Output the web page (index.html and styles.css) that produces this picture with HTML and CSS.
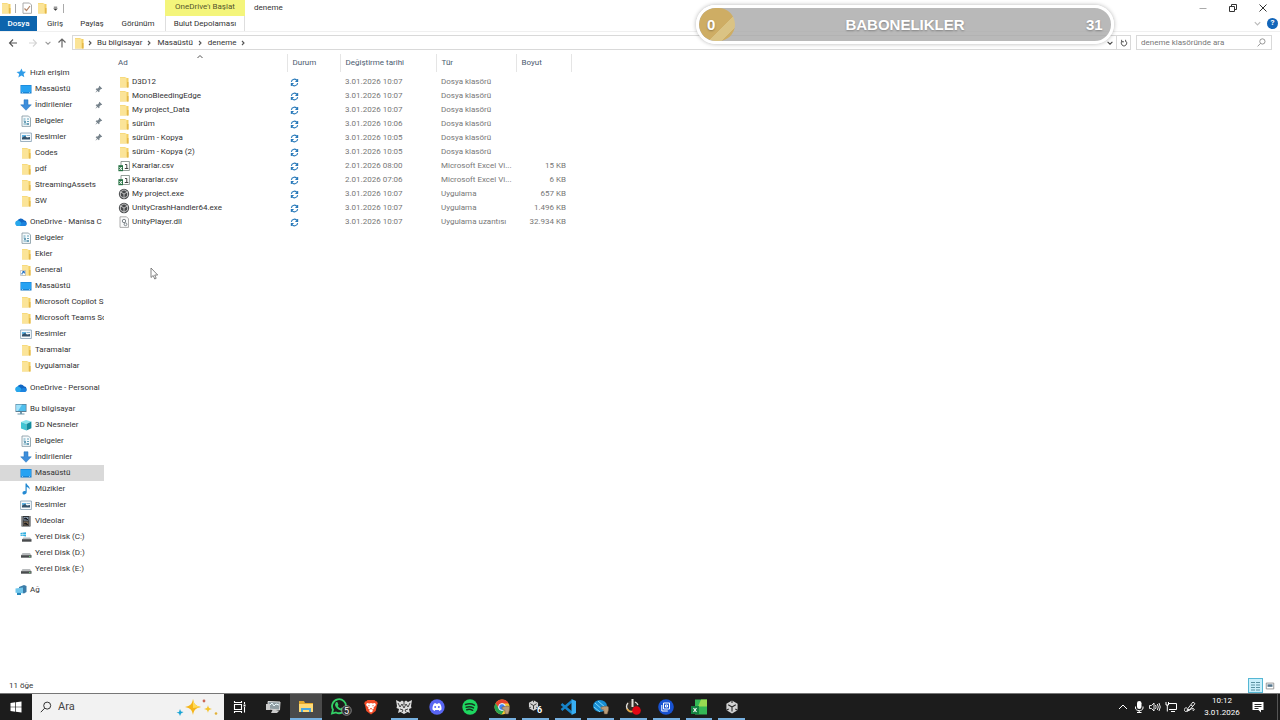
FILE: index.html
```html
<!DOCTYPE html>
<html lang="tr">
<head>
<meta charset="utf-8">
<title>deneme</title>
<link rel="stylesheet" href="styles.css">
</head>
<body>
<svg class="sprite" aria-hidden="true">
  <symbol id="folder" viewBox="0 0 12 12"><path fill="#f3cf62" d="M2 1h5l1 1h2.500v9.500H2z"/><path fill="#fbe498" d="M2 1.500h6.500V11H2z"/><path fill="#e3b84a" d="M9 6h1.500v5.500H9z"/></symbol>
  <symbol id="star" viewBox="0 0 12 12"><path fill="#2f9ce8" d="M6.500 1.500l1.200 2.900 3.300.3-2.400 2.200.7 3.400-2.800-1.700-3.200 1.900.9-3.500L1.500 5l3.400-.4z"/></symbol>
  <symbol id="desktop" viewBox="0 0 12 12"><path fill="#1479c9" d="M.500 2h11v8.500H.500z"/><path fill="#27a2f2" d="M1 2.500h10v6.800H1z"/><path fill="#fff" d="M2 9.600h1v.5H2zM9 9.600h1v.5H9z"/></symbol>
  <symbol id="down" viewBox="0 0 12 12"><path fill="#3e8edb" stroke="#2370bb" stroke-width=".5" d="M4 .8h4v5h3.300L6 11.300.7 5.800H4z"/></symbol>
  <symbol id="doc" viewBox="0 0 12 12"><path fill="#f6fafc" stroke="#8095a0" stroke-width=".8" d="M2 1h6.500l2 2v8.400H2z"/><path fill="none" stroke="#3c8aa8" stroke-width=".8" d="M3.500 4h2M7 4h2M3.500 6h2M7 6.500h2M3.500 9h5.500"/><path fill="#70a1b8" d="M4 6h2v2H4zM7 8h2v2H7z"/></symbol>
  <symbol id="picture" viewBox="0 0 12 12"><path fill="#f8fbfd" stroke="#849eb2" stroke-width=".8" d="M.6 2h10.800v8.500H.6z"/><path fill="#5fb2e2" d="M2 4h4v2H2z"/><path fill="#34526b" d="M2 8.500V6.500L5 5l2 1.500L10 6v2.500z"/><path fill="#8cb6d1" d="M6.500 4H10v1H6.500z"/></symbol>
  <symbol id="cloud" viewBox="0 0 12 12"><path fill="#1167c4" d="M3 10a2.700 2.700 0 0 1-.6-5.200A3.700 3.700 0 0 1 9 4.300 2.900 2.900 0 0 1 9.500 10z"/><path fill="#28a8ec" d="M3 10a2.700 2.700 0 0 1 0-5.400c2 0 3.500 2.600 6.500 5.400z"/><path fill="#1b83df" d="M6 7.500c2-2.500 5.600-1.700 5.600.500A2 2 0 0 1 9.500 10H5z"/></symbol>
  <symbol id="link" viewBox="0 0 12 12"><use href="#folder"/><path fill="#fff" stroke="#999" stroke-width=".5" d="M.5 6.500h5v5h-5z"/><path fill="none" stroke="#176abf" d="M2 10.500V9l2-1M2.500 7.500H4.300V9.500"/></symbol>
  <symbol id="pc" viewBox="0 0 12 12"><path fill="#5c7d92" d="M.5 1h11v8H.5z"/><path fill="#4fbfee" d="M1.200 1.700h9.600v6.300H1.200z"/><path fill="#a2e2fa" d="M1.200 1.700H7L3 8H1.200z"/><path fill="#739aae" d="M5 9h2v1.500h2.500v1h-7v-1H5z"/></symbol>
  <symbol id="cube" viewBox="0 0 12 12"><path fill="#8be5ed" d="M1 3l5-2 5.400 1.500L6.500 5z"/><path fill="#42c5d3" d="M1 3l5.500 2v6.500L1 9.500z"/><path fill="#168d9e" d="M6.500 5l4.900-2.500v6.800l-4.900 2.200z"/></symbol>
  <symbol id="note" viewBox="0 0 12 12"><path fill="#2389d2" d="M5.500.5h1.200c.3 2 3.600 2.500 2.700 6-.5-1.700-1.400-2.200-2.700-2.600v5.400c-.2 2.500-4.200 2.900-4.200.6 0-1.600 1.800-2.300 3-1.600z"/></symbol>
  <symbol id="film" viewBox="0 0 12 12"><path fill="#303438" d="M1.500 1h9v10.500h-9z"/><path fill="#8496a9" d="M3.500 2h5v3.500h-5z"/><path fill="#75634e" d="M3.500 6.500h5v4h-5z"/><path stroke="#eee" stroke-dasharray="1 1" d="M2.500 1.500V11M9.500 1.500V11" stroke-width=".8"/><path stroke="#181b25" d="M4 4l2-1 2 2M4 9l2-1 2 2"/></symbol>
  <symbol id="disk" viewBox="0 0 12 12"><path fill="#b8bbbd" d="M2.500 6h7.500l1.500 2.500H1z"/><path fill="#484b4d" d="M1 8.200h10.500v2.500H1z"/><path fill="#7cec8b" d="M9 9h1.500v.8H9z"/></symbol>
  <symbol id="diskwin" viewBox="0 0 12 12"><path fill="#b8bbbd" d="M3.500 6.500H10l1.500 2H2z"/><path fill="#484b4d" d="M2 8.200h9.500v2.500H2z"/><path fill="#30afe0" d="M.5 2l2.200-.4v1.500H.5zM3.100 1.500L6 1.200v1.900H3.100zM.5 3.500h2.200V5L.5 4.800zM3.100 3.500H6v2l-2.900-.4z"/></symbol>
  <symbol id="network" viewBox="0 0 12 12"><path fill="#3b7ca8" d="M4 3l5-2 2.500 1v6L9 9.500 4 8z"/><path fill="#70c6eb" d="M.5 4.500l7.500-1v5.700l-7.500-.5z"/><path fill="#2688bd" d="M2 8.700l4 .3v2H2z"/></symbol>
  <symbol id="pin" viewBox="0 0 10 10"><path fill="#77838c" d="M5.500 1L9 4.500l-.8.6-.7-.2-2 2 .1 1.500-.8.8L3.200 7.500 1 9.300l-.3-.2 1.800-2.300L.8 5.200l.8-.8 1.600.1 2-2-.3-.8z"/></symbol>
  <symbol id="csv" viewBox="0 0 12 12"><path fill="#fff" stroke="#798780" stroke-width=".8" d="M3 1.500h8.400v9H3z"/><path fill="#247142" d="M.4 5.200h4.600v6H.4z"/><path fill="none" stroke="#fff" d="M1.500 7l2.500 3M4 7l-2.500 3"/><path fill="none" stroke="#333" stroke-width=".9" d="M7 4.500h1.800v4M6.800 8.500h3.500"/></symbol>
  <symbol id="unity" viewBox="0 0 12 12"><circle cx="6" cy="6" r="5.200" fill="#484a4c"/><path fill="none" stroke="#ddd" stroke-width=".8" d="M6 1.800l3.600 2.100v4.200L6 10.200 2.400 8.100V3.900zM6 6v4.200M6 6L2.400 3.900M6 6l3.600-2.100"/></symbol>
  <symbol id="dll" viewBox="0 0 12 12"><path fill="#fafafa" stroke="#999" stroke-width=".8" d="M2 .8h6.500l2 2v8.600H2z"/><circle cx="6" cy="5" r="1.700" fill="none" stroke="#7d858b"/><circle cx="7.500" cy="8.300" r="1.400" fill="none" stroke="#7d858b"/></symbol>
  <symbol id="sync" viewBox="0 0 10 10"><path fill="none" stroke="#2678b9" stroke-width="1.200" d="M1.500 4.300A3.400 3.400 0 0 1 8 3.300M8.500 5.700A3.400 3.400 0 0 1 2 6.700M8.500 1v2.800H6M1.500 9V6.200H4"/></symbol>
  <symbol id="right" viewBox="0 0 8 8"><path fill="none" stroke="#555" stroke-width="1.100" d="M3 2l2 2-2 2"/></symbol>
  <symbol id="chev" viewBox="0 0 10 10"><path fill="none" stroke="currentColor" stroke-width="1.300" d="M2 3.500L5 6.500l3-3"/></symbol>
  <symbol id="lens" viewBox="0 0 12 12"><circle cx="7.200" cy="4.600" r="3.500" fill="none" stroke="currentColor" stroke-width="1"/><path stroke="currentColor" stroke-width="1" d="M4.700 7.200L.8 11.200"/></symbol>
  <symbol id="hex" viewBox="0 0 16 16"><path fill="#d2d2d2" d="M8 1.500l5.600 3.200v6.600L8 14.500l-5.600-3.200V4.700z"/><path fill="none" stroke="#292929" stroke-width="1.100" d="M8 8v4.500M8 8L4.200 5.800M8 8l3.800-2.200M8 1v3M2 11.500l2.700-1.500M14 11.500L11.300 10"/></symbol>
  <symbol id="hand" viewBox="0 0 16 16"><path fill="#b99c7a" stroke="#66513d" stroke-width=".5" d="M8 8l6-1 1.500 1v3l-1.200 4h-3l-.6-4L8 10z"/></symbol>
</svg>

<header>
  <div class="titlebar">
    <div class="quick">
      <svg class="icon"><use href="#folder"/></svg><span class="rule"></span>
      <button class="props" aria-label="Özellikler"><svg class="icon" viewBox="0 0 12 12"><path fill="#fff" stroke="#aaa" d="M2 1h6.500l2 2v8.300H2z"/><path fill="none" stroke="#b28568" stroke-width="1.200" d="M3.500 6.500l2 2L9 4"/></svg></button>
      <button aria-label="Yeni klasör"><svg class="icon"><use href="#folder"/></svg></button>
      <button aria-label="Özelleştir"><svg class="mini" viewBox="0 0 8 8"><path fill="#333" d="M2 4h4L4 6zM2.500 2.500h3v.5h-3z"/></svg></button><span class="rule"></span>
    </div>
    <div class="context">OneDrive'ı Başlat</div>
    <h1>deneme</h1>
    <div class="window-buttons">
      <button aria-label="Simge durumuna küçült"><svg viewBox="0 0 10 10"><path stroke="#aaa" d="M1.500 5.500h7"/></svg></button>
      <button aria-label="Önceki boyut"><svg viewBox="0 0 10 10"><path fill="none" stroke="#333" d="M1.500 3.500h5v5h-5zM3.500 3V1.500h5v5H7"/></svg></button>
      <button aria-label="Kapat"><svg viewBox="0 0 10 10"><path stroke="#333" d="M1.500 1.500l7 7M8.500 1.500l-7 7"/></svg></button>
    </div>
  </div>
  <nav class="tabs" aria-label="Şerit">
    <button class="tab file">Dosya</button>
    <button class="tab home">Giriş</button>
    <button class="tab share">Paylaş</button>
    <button class="tab view">Görünüm</button>
    <button class="tab cloud-tab">Bulut Depolaması</button>
    <div class="help"><button aria-label="Şeridi genişlet"><svg class="mini faded"><use href="#chev"/></svg></button>
    <button class="question" aria-label="Yardım">?</button></div>
  </nav>
</header>

<div class="address-row">
  <div class="history">
    <button aria-label="Geri"><svg viewBox="0 0 12 12"><path fill="none" stroke="#555" stroke-width="1.100" d="M10 6H2.500M6 2.500L2.500 6 6 9.500"/></svg></button>
    <button aria-label="İleri"><svg viewBox="0 0 12 12"><path fill="none" stroke="#d5d5d5" stroke-width="1.100" d="M2 6h7.500M6 2.500L9.500 6 6 9.500"/></svg></button>
    <button class="slim" aria-label="Son konumlar"><svg class="recent"><use href="#chev"/></svg></button>
    <button aria-label="Yukarı"><svg viewBox="0 0 12 12"><path fill="none" stroke="#666" stroke-width="1.200" d="M6 10.500V2M2.500 5.500L6 2l3.500 3.500"/></svg></button>
  </div>
  <div class="address">
    <svg class="icon"><use href="#folder"/></svg><svg class="mini"><use href="#right"/></svg>
    <a href="#">Bu bilgisayar</a><svg class="mini"><use href="#right"/></svg>
    <a href="#">Masaüstü</a><svg class="mini"><use href="#right"/></svg>
    <a href="#">deneme</a><svg class="mini"><use href="#right"/></svg>
    <div class="address-end"><button aria-label="Adresler"><svg class="mini dark"><use href="#chev"/></svg></button>
    <button class="refresh" aria-label="Yenile"><svg class="mini" viewBox="0 0 10 10"><path fill="none" stroke="#555" stroke-width="1.200" d="M7 2.500A3.400 3.400 0 1 1 3 2.500M2 1v2.500h3M7 1v2"/></svg></button></div>
  </div>
  <label class="find"><input type="search" aria-label="Ara" placeholder="deneme klasöründe ara"><svg class="mini"><use href="#lens"/></svg></label>
</div>

<main>
  <nav class="tree" aria-label="Gezinti">
    <ul>
      <li><a class="root" href="#"><svg class="icon"><use href="#star"/></svg>Hızlı erişim</a></li>
      <li><a href="#"><svg class="icon"><use href="#desktop"/></svg>Masaüstü<svg class="pin"><use href="#pin"/></svg></a></li>
      <li><a href="#"><svg class="icon"><use href="#down"/></svg>İndirilenler<svg class="pin"><use href="#pin"/></svg></a></li>
      <li><a href="#"><svg class="icon"><use href="#doc"/></svg>Belgeler<svg class="pin"><use href="#pin"/></svg></a></li>
      <li><a href="#"><svg class="icon"><use href="#picture"/></svg>Resimler<svg class="pin"><use href="#pin"/></svg></a></li>
      <li><a href="#"><svg class="icon"><use href="#folder"/></svg>Codes</a></li>
      <li><a href="#"><svg class="icon"><use href="#folder"/></svg>pdf</a></li>
      <li><a href="#"><svg class="icon"><use href="#folder"/></svg>StreamingAssets</a></li>
      <li><a href="#"><svg class="icon"><use href="#folder"/></svg>SW</a></li>
    </ul>
    <ul>
      <li><a class="root" href="#"><svg class="icon"><use href="#cloud"/></svg>OneDrive - Manisa C</a></li>
      <li><a href="#"><svg class="icon"><use href="#doc"/></svg>Belgeler</a></li>
      <li><a href="#"><svg class="icon"><use href="#folder"/></svg>Ekler</a></li>
      <li><a href="#"><svg class="icon"><use href="#link"/></svg>General</a></li>
      <li><a href="#"><svg class="icon"><use href="#desktop"/></svg>Masaüstü</a></li>
      <li><a href="#"><svg class="icon"><use href="#folder"/></svg>Microsoft Copilot S</a></li>
      <li><a href="#"><svg class="icon"><use href="#folder"/></svg>Microsoft Teams So</a></li>
      <li><a href="#"><svg class="icon"><use href="#picture"/></svg>Resimler</a></li>
      <li><a href="#"><svg class="icon"><use href="#folder"/></svg>Taramalar</a></li>
      <li><a href="#"><svg class="icon"><use href="#folder"/></svg>Uygulamalar</a></li>
    </ul>
    <ul class="personal">
      <li><a class="root" href="#"><svg class="icon"><use href="#cloud"/></svg>OneDrive - Personal</a></li>
    </ul>
    <ul>
      <li><a class="root" href="#"><svg class="icon"><use href="#pc"/></svg>Bu bilgisayar</a></li>
      <li><a href="#"><svg class="icon"><use href="#cube"/></svg>3D Nesneler</a></li>
      <li><a href="#"><svg class="icon"><use href="#doc"/></svg>Belgeler</a></li>
      <li><a href="#"><svg class="icon"><use href="#down"/></svg>İndirilenler</a></li>
      <li><a class="current" href="#"><svg class="icon"><use href="#desktop"/></svg>Masaüstü</a></li>
      <li><a href="#"><svg class="icon"><use href="#note"/></svg>Müzikler</a></li>
      <li><a href="#"><svg class="icon"><use href="#picture"/></svg>Resimler</a></li>
      <li><a href="#"><svg class="icon"><use href="#film"/></svg>Videolar</a></li>
      <li><a href="#"><svg class="icon"><use href="#diskwin"/></svg>Yerel Disk (C:)</a></li>
      <li><a href="#"><svg class="icon"><use href="#disk"/></svg>Yerel Disk (D:)</a></li>
      <li><a href="#"><svg class="icon"><use href="#disk"/></svg>Yerel Disk (E:)</a></li>
    </ul>
    <ul>
      <li><a class="root" href="#"><svg class="icon"><use href="#network"/></svg>Ağ</a></li>
    </ul>
  </nav>
  <section class="files">
    <table>
      <colgroup><col class="c-name"><col class="c-state"><col class="c-date"><col class="c-type"><col class="c-size"></colgroup>
      <thead><tr><th>Ad<svg class="sort" viewBox="0 0 8 6"><path fill="none" stroke="#555" d="M1.500 4L4 1.500 6.500 4"/></svg></th><th>Durum</th><th>Değiştirme tarihi</th><th>Tür</th><th>Boyut</th></tr></thead>
      <tbody>
        <tr><td><svg class="icon"><use href="#folder"/></svg>D3D12</td><td><svg class="sync"><use href="#sync"/></svg></td><td>3.01.2026 10:07</td><td>Dosya klasörü</td><td></td></tr>
        <tr><td><svg class="icon"><use href="#folder"/></svg>MonoBleedingEdge</td><td><svg class="sync"><use href="#sync"/></svg></td><td>3.01.2026 10:07</td><td>Dosya klasörü</td><td></td></tr>
        <tr><td><svg class="icon"><use href="#folder"/></svg>My project_Data</td><td><svg class="sync"><use href="#sync"/></svg></td><td>3.01.2026 10:07</td><td>Dosya klasörü</td><td></td></tr>
        <tr><td><svg class="icon"><use href="#folder"/></svg>sürüm</td><td><svg class="sync"><use href="#sync"/></svg></td><td>3.01.2026 10:06</td><td>Dosya klasörü</td><td></td></tr>
        <tr><td><svg class="icon"><use href="#folder"/></svg>sürüm - Kopya</td><td><svg class="sync"><use href="#sync"/></svg></td><td>3.01.2026 10:05</td><td>Dosya klasörü</td><td></td></tr>
        <tr><td><svg class="icon"><use href="#folder"/></svg>sürüm - Kopya (2)</td><td><svg class="sync"><use href="#sync"/></svg></td><td>3.01.2026 10:05</td><td>Dosya klasörü</td><td></td></tr>
        <tr><td><svg class="icon"><use href="#csv"/></svg>Kararlar.csv</td><td><svg class="sync"><use href="#sync"/></svg></td><td>2.01.2026 08:00</td><td>Microsoft Excel Vi...</td><td>15 KB</td></tr>
        <tr><td><svg class="icon"><use href="#csv"/></svg>Kkararlar.csv</td><td><svg class="sync"><use href="#sync"/></svg></td><td>2.01.2026 07:06</td><td>Microsoft Excel Vi...</td><td>6 KB</td></tr>
        <tr><td><svg class="icon"><use href="#unity"/></svg>My project.exe</td><td><svg class="sync"><use href="#sync"/></svg></td><td>3.01.2026 10:07</td><td>Uygulama</td><td>657 KB</td></tr>
        <tr><td><svg class="icon"><use href="#unity"/></svg>UnityCrashHandler64.exe</td><td><svg class="sync"><use href="#sync"/></svg></td><td>3.01.2026 10:07</td><td>Uygulama</td><td>1.496 KB</td></tr>
        <tr><td><svg class="icon"><use href="#dll"/></svg>UnityPlayer.dll</td><td><svg class="sync"><use href="#sync"/></svg></td><td>3.01.2026 10:07</td><td>Uygulama uzantısı</td><td>32.934 KB</td></tr>
      </tbody>
    </table>
  </section>
</main>

<div class="status">
  <span>11 öğe</span>
  <div class="modes">
    <button class="chosen" aria-label="Ayrıntılar"><svg viewBox="0 0 12 12"><path stroke="#5a92a2" stroke-dasharray="4 1" d="M1 2.500h10M1 5h10M1 7.500h10M1 10h10"/></svg></button>
    <button aria-label="Büyük simgeler"><svg viewBox="0 0 12 12"><path fill="#fff" stroke="#888" d="M1.500 2.500h9v7h-9z"/><path fill="#55768d" d="M3 4h6v3H3z"/></svg></button>
  </div>
</div>

<footer class="taskbar">
  <button class="start" aria-label="Başlat"><svg viewBox="0 0 12 12"><path fill="#fff" d="M.5 2L5.300 1.300v4.400H.5zM6 1.200l5.500-.8v5.300H6zM.5 6.300h4.800v4.400L.5 10zM6 6.300h5.500v5.300L6 10.800z"/></svg></button>
  <label class="search"><svg class="icon"><use href="#lens"/></svg><input type="text" aria-label="Windows'ta ara" placeholder="Ara">
    <svg class="sparkles" viewBox="0 0 42 20"><path fill="#f5b519" d="M17 2c1 5 2.500 7 8 8-5.500 1-7 3-8 8-1-5-2.500-7-8-8 5.500-1 7-3 8-8z"/><path fill="#ffda55" d="M17 2c1 5 2.500 7 8 8l-8 1z"/><path fill="#f4c42b" d="M32 8c.5 3 1.500 3.500 4 4-2.500.5-3.500 1-4 4-.5-3-1.500-3.500-4-4 2.500-.5 3.500-1 4-4z"/><path fill="#1aa4d4" d="M4 12l1 2.500 2.500.5L5 16.500 4 19l-1-2.500-2.500-1L3 15z"/><circle cx="28" cy="4" r="1.400" fill="#cc6754"/><circle cx="40" cy="16.500" r="1.300" fill="#e2b238"/></svg>
  </label>
  <div class="apps">
    <button aria-label="Görev görünümü"><svg viewBox="0 0 16 16"><path fill="none" stroke="#fff" stroke-width="1.100" d="M2.500 5.500h7v5h-7zM2.500 2v1.500h7V2M2.500 14v-1.500h7V14M12.500 3v2M12.500 8v5.500"/><path fill="#fff" d="M11.500 5.500h2v2h-2z"/></svg></button>
    <button aria-label="Sistem izleyici"><svg viewBox="0 0 16 16"><path fill="#8f9da3" stroke="#ddd" d="M3 2.500l12 .5-.5 8-11-1z"/><path fill="none" stroke="#ecfaff" d="M4 7l3-3 2 3 2-2 3 1"/><path fill="#ccc" d="M1 5h4v6H1zM8 10l6 2-2 2H6z"/></svg></button>
    <button class="open active" aria-label="Dosya Gezgini"><svg viewBox="0 0 16 16"><path fill="#e4a92d" d="M1 2h5l1 2h8v9H1z"/><path fill="#ffda75" d="M1 5h14v8H1z"/><path fill="#4ba8df" d="M3 9h10v4h-2v-2H5v2H3z"/></svg></button>
    <button aria-label="WhatsApp"><svg class="wide" viewBox="0 0 22 18"><path fill="none" stroke="#33d066" stroke-width="1.800" d="M2 15.500l1-3.800A7 7 0 1 1 6 14.500z"/><path fill="#33d066" d="M6 4l1.500.3L8.500 7l-.8 1c1 1.500 1.800 2 3 2.500l1-1 2 1c0 2-1.500 2.500-3 2C7.500 11.500 5 8.500 5 6.500z"/><circle cx="16.500" cy="12.500" r="4.800" fill="#303030" stroke="#aaa" stroke-width=".7"/><text x="14" y="16" class="badge">5</text></svg></button>
    <button aria-label="Brave"><svg viewBox="0 0 16 16"><path fill="#f04b27" d="M4.500 1h7l1.200 1.300 1.300.2.800 2-.8 1.500-1.300 6L8 15.500 3.300 12 2 6l-.8-1.500.8-2 1.300-.2z"/><path fill="#fff" d="M4 4l2.500.5L8 4l1.500.5L12 4l1 2-2.500 2.500.3 1.500-1.800.5 1 1.500L8 13.500 6 12l1-1.500-1.800-.5.3-1.500L3 6z"/><path fill="#f04b27" d="M5 6l2 .8-1 .7zM11 6l-2 .8 1 .7zM7 9h2l-1 2z"/></svg></button>
    <button class="open" aria-label="Wallpaper"><svg viewBox="0 0 16 16"><path fill="#ddd" d="M0 1l4 2 2-1.500L8 3l2-1.500L12 3l4-2-1 6 .5 2-2.500 1 1 4-2.500-1L8 15l-3.500-2L2 14l1-4-2.500-1L1 7z"/><path fill="none" stroke="#333" stroke-width=".9" d="M2 4l2 4 2-3 2 4 2-4 2 3 2-4M4 10l3 1-1 2M12 10l-3 1 1 2M8 3v3"/></svg></button>
    <button aria-label="Discord"><svg viewBox="0 0 16 16"><circle cx="8" cy="8" r="7.700" fill="#5865f2"/><path fill="#fff" d="M5 4.500l1.500-.5.5.7h2l.5-.7 1.500.5c1.300 2 1.700 4 1.500 6L10.500 12l-.7-1H6.200l-.7 1-2-1.500c-.2-2 .3-4 1.500-6z"/><circle cx="6.200" cy="8" r="1" fill="#5865f2"/><circle cx="9.800" cy="8" r="1" fill="#5865f2"/></svg></button>
    <button aria-label="Spotify"><svg viewBox="0 0 16 16"><circle cx="8" cy="8" r="7.700" fill="#1ed760"/><path fill="none" stroke="#17331f" stroke-linecap="round" stroke-width="1.500" d="M3.500 5.500c3-1 6.500-.7 9 .7M4.200 8.200c2.500-.8 5.200-.5 7.300.7M4.800 10.700c2-.6 4-.4 5.800.6"/></svg></button>
    <button class="open" aria-label="Chrome"><svg viewBox="0 0 16 16"><circle cx="8" cy="8" r="7.500" fill="#f8c834"/><path fill="#e6432f" d="M1.500 4.300A7.500 7.500 0 0 1 14.700 4.600H8L5 10z"/><path fill="#28a552" d="M1.500 4.300A7.500 7.500 0 0 0 7.500 15.500L11 9.800H5z"/><circle cx="8" cy="8" r="3.400" fill="#4285f4" stroke="#fff"/><use href="#hand"/></svg></button>
    <button class="open" aria-label="Unity 6"><svg viewBox="0 0 16 16"><use href="#hex" width="13" height="13"/><text x="10" y="14" class="six">6</text></svg></button>
    <button class="open" aria-label="Visual Studio Code"><svg viewBox="0 0 16 16"><path fill="none" stroke="#1684ca" stroke-width="2.500" d="M12 2L1.500 11M12 14L1.500 5"/><path fill="#38aff4" d="M11.500 0L16 2v12l-4.500 2z"/></svg></button>
    <button class="open" aria-label="Tarayıcı"><svg viewBox="0 0 16 16"><ellipse cx="7" cy="7" rx="7" ry="6" fill="#178ed3"/><path fill="none" stroke="#82d7fc" stroke-width="1" d="M2 4l9 8M5 2l8 7M1 8l6 5"/><use href="#hand"/></svg></button>
    <button class="open" aria-label="Kaydedici"><svg viewBox="0 0 16 16"><circle cx="7" cy="8" r="6.500" fill="#332e29"/><path fill="none" stroke="#e4e2dc" stroke-width="1.300" d="M3 4a5.500 5.500 0 0 0 0 7M10 3a6 6 0 0 1 3 3"/><path stroke="#e4e2dc" stroke-width="2" d="M7.500 0v8"/><path fill="none" stroke="#e5ab48" stroke-width="1.600" d="M2 10q3 4 6 2"/><circle cx="11.500" cy="11.500" r="4.300" fill="#e30613"/></svg></button>
    <button class="open" aria-label="Ekran"><svg viewBox="0 0 16 16"><circle cx="8" cy="8" r="7.800" fill="#1852d1"/><path fill="none" stroke="#fff" stroke-width="1" d="M5.500 4h6v6h-6zM3.800 6v6h6M7.500 6h2v2h-2z"/></svg></button>
    <button class="open" aria-label="Excel"><svg viewBox="0 0 16 16"><path fill="#35b856" d="M4 .5h12v15H4z"/><path fill="#98db51" d="M10 .5h6v7H7z"/><path fill="#148342" d="M0 7h8v8H0z"/><path stroke="#fff" stroke-width="1.100" d="M2.500 9l3 4M5.500 9l-3 4"/></svg></button>
    <button class="open" aria-label="My project"><svg viewBox="0 0 16 16"><use href="#hex"/></svg></button>
  </div>
  <div class="tray">
    <button aria-label="Gizli simgeler"><svg viewBox="0 0 12 12"><path fill="none" stroke="#fff" d="M2 8l4-4 4 4"/></svg></button>
    <button aria-label="Mikrofon"><svg viewBox="0 0 12 12"><rect x="4" y="0" width="4.500" height="8" rx="2.200" fill="#fff"/><path fill="none" stroke="#fff" d="M2.500 5.500v1.500c0 3.500 7.500 3.500 7.500 0V5.500M6.200 10v2M4 11.500h4.500"/></svg></button>
    <button aria-label="Ses"><svg viewBox="0 0 12 12"><path fill="none" stroke="#fff" stroke-width=".9" d="M.5 4.500h2L5 2v8L2.500 7.500h-2zM6.500 4q1.300 2 0 4M8.300 3q2 3 0 6M10 2q2.500 4 0 8"/></svg></button>
    <button aria-label="Ağ"><svg viewBox="0 0 12 12"><path fill="none" stroke="#fff" d="M4 2.500h7.500v6H4M1 1v3h2.500V1M2.300 4v6.500M6 10.500h4"/></svg></button>
    <button class="pen" aria-label="Kalem"><svg viewBox="0 0 12 12"><path fill="none" stroke="#fff" stroke-width=".9" d="M3.500 8L9 1l2 1.700L5.500 9zM3.500 8L3 10l2.500-1M7 4l2 1.500M3 7C0 6-.5 10 1.500 10.500c3 .5 6-4.500 8.500-2.500 1 1-.5 2-1.500 1"/></svg></button>
    <div class="clock"><time>10:12</time><time>3.01.2026</time></div>
    <button class="notices" aria-label="Bildirimler"><svg viewBox="0 0 12 12"><path fill="#fff" d="M.5 1h11v8H9v2.500L6.500 9h-6z"/><path stroke="#292929" d="M2.500 3.500h7M2.500 5.500h7M2.500 7.500h4"/></svg></button>
  </div>
</footer>

<aside class="goal"><span class="progress"></span><span class="low">0</span><strong>BABONELIKLER</strong><span class="high">31</span></aside>
<svg class="cursor" viewBox="0 0 9 13" aria-hidden="true"><path fill="#fff" stroke="#666" stroke-width=".8" d="M1 1v9.500l2.200-2 1.500 3.500 1.500-.7-1.500-3.300h3z"/></svg>
</body>
</html>
```
FILE: styles.css
```css
* { box-sizing: border-box; }
body {
  margin: 0;
  min-height: 100vh;
  display: flex;
  flex-direction: column;
  position: relative;
  background: #fff;
  color: #333;
  font-family: Roboto, "Noto Sans", sans-serif;
  font-size: 8px;
  line-height: 12px;
}
button { border: 0; padding: 0; background: none; color: inherit; font: inherit; display: flex; align-items: center; justify-content: center; }
a { color: inherit; text-decoration: none; }
svg { display: block; flex: none; width: 12px; height: 12px; }
.sprite { position: absolute; width: 0; height: 0; }
.mini { width: 9px; height: 9px; color: #777; }
.recent { width: 8px; height: 8px; color: #999; }
.faded { color: #bbb; }
.dark { color: #444; }

.titlebar { display: flex; height: 16px; align-items: center; }
.quick { display: flex; align-items: center; width: 165px; }
.quick button { margin-left: 3px; }
.quick .props { margin-left: 5px; }
.quick .rule { width: 1px; height: 9px; background: #aaa; margin-left: 3px; }
.context { width: 80px; height: 16px; background: #f4f57b; text-align: center; line-height: 14px; color: #55552c; }
h1 { margin: 0 0 0 9px; font-size: 8px; font-weight: 400; }
.window-buttons { display: flex; margin-left: auto; padding-right: 2px; height: 14px; }
.window-buttons button { width: 30px; }
.window-buttons svg { width: 10px; height: 10px; }

.tabs { display: flex; height: 16px; border-bottom: 1px solid #f0f0f0; }
.tab { height: 15px; }
.file { width: 37px; background: #0c64ad; color: #fff; font-weight: 500; }
.home { width: 36px; }
.share { width: 38px; }
.view { width: 54px; }
.cloud-tab { width: 80px; border: solid #dedede; border-width: 0 1px; }
.help { margin-left: auto; display: flex; align-items: center; gap: 5px; padding-right: 2px; height: 14px; }
.question { width: 11px; height: 11px; border-radius: 50%; background: #1265b9; color: #fff; font-weight: 700; }

.address-row { display: flex; padding: 3px 8px 0 0; }
.history { width: 72px; display: flex; align-items: center; padding-left: 5px; }
.history button { width: 16px; }
.history button:nth-child(2) { margin-left: 4px; }
.history .slim { width: 13px; }
.address { flex: 1; display: flex; align-items: center; height: 15px; border: 1px solid #d9d9d9; gap: 2px; }
.address .icon { margin-right: -1px; }
.address a { padding: 0 1px; }
.address a + .mini { margin-right: 1px; }
.address .mini { width: 8px; height: 8px; }
.address-end { display: flex; align-items: stretch; height: 13px; margin-left: auto; }
.address-end button { width: 12px; }
.address-end .refresh { width: 14px; border-left: 1px solid #d9d9d9; }
.find { width: 136px; margin-left: 5px; border: 1px solid #d9d9d9; display: flex; align-items: center; padding: 0 5px 0 4px; }
input { border: 0; outline: 0; padding: 0; margin: 0; background: none; font: inherit; min-width: 0; flex: 1; }
input::placeholder { color: #777; opacity: 1; }

main { flex: 1; display: flex; border-top: 4px solid #fff; }
.tree { width: 104px; padding-top: 11px; }
ul { list-style: none; margin: 0; padding: 0; }
.tree ul + ul { margin-top: 5px; }
.tree ul + .personal { margin-top: 6px; }
.tree a { height: 16px; display: flex; align-items: center; gap: 3px; padding-left: 20px; white-space: nowrap; overflow: hidden; }
.tree .root { padding-left: 15px; }
.tree .current { background: #d9d9d9; }
.tree .pin { width: 8px; height: 8px; margin: 0 1px 0 auto; }
.files { flex: 1; padding-left: 9px; }

table { width: 458px; table-layout: fixed; border-collapse: collapse; }
.c-name { width: 174px; }
.c-state { width: 53px; }
.c-date { width: 96px; }
.c-type { width: 80px; }
.c-size { width: 55px; }
th { height: 18px; padding: 0 0 0 5px; text-align: left; font-weight: 400; color: #4c5b70; border-right: 1px solid #e5e5e5; position: relative; }
.sort { position: absolute; left: 48%; top: 0; width: 8px; height: 6px; }
td { height: 14px; padding: 0 0 0 5px; white-space: nowrap; color: #777; overflow: hidden; }
tbody tr:first-child td { height: 17px; padding-top: 3px; }
td:first-child { color: #333; }
td .icon { display: inline-block; vertical-align: middle; margin-right: 2px; }
td:last-child { text-align: right; padding: 0 5px 0 0; }
.sync { width: 9px; height: 9px; margin-left: -2px; }

.status { height: 15px; padding: 0 4px 0 9px; display: flex; align-items: center; justify-content: space-between; }
.modes { display: flex; gap: 1px; }
.modes button { width: 15px; height: 15px; }
.modes button + button { width: 12px; }
.modes svg { width: 10px; height: 10px; }
.modes .chosen { background: #c9effb; border: 1px solid #55b7d4; }
.modes .chosen svg { width: 12px; height: 12px; }

.taskbar { height: 27px; display: flex; background: #1c1c1c; border-top: 1px solid #777; color: #fff; }
.start { width: 32px; }
.search { width: 192px; background: #f2f2f2; color: #333; display: flex; align-items: center; padding: 0 6px 0 8px; font-size: 11px; }
.search input { margin-left: 6px; }
.search input::placeholder { color: #444; }
.search .sparkles { width: 42px; height: 20px; }
.apps { width: 524px; display: grid; grid-template-columns: repeat(16, 1fr); }
.apps button { position: relative; }
.apps svg { width: 16px; height: 16px; }
.apps .wide { width: 22px; height: 18px; margin-left: 5px; }
.apps .active { background: #4a4a4a; }
.open::after { content: ""; position: absolute; left: 3px; right: 3px; bottom: 0; height: 2px; background: #76b0e0; }
.active::after { left: 0; right: 0; }
.badge { font-size: 9px; fill: #fff; }
.six { font-size: 9px; font-weight: 700; fill: #fff; }
.tray { display: flex; margin-left: auto; border-right: 1px solid #555; margin-right: 2px; }
.tray button { width: 16px; }
.tray .pen { width: 22px; }
.clock { width: 42px; display: flex; flex-direction: column; align-items: center; justify-content: center; }
.tray .notices { width: 30px; margin-right: 4px; }

.goal { position: absolute; left: 696px; top: 5px; width: 418px; height: 39px; border: 3px solid #fff; border-radius: 20px; background: rgba(167, 167, 167, .8); box-shadow: 0 0 4px rgba(0, 0, 0, .3); display: flex; align-items: center; padding: 0 8px; overflow: hidden; color: #fff; font: 700 15px/18px "Liberation Sans", Arial, sans-serif; text-shadow: 0 1px 2px rgba(0, 0, 0, .3); }
.goal span, .goal strong { position: relative; }
.goal strong { flex: 1; text-align: center; }
.goal .low, .goal .high { width: 17px; }
.goal .progress { position: absolute; left: 0; top: 0; width: 36px; height: 33px; border-radius: 17px; background: linear-gradient(135deg, #cead64 62%, #dac384 62%, #dac384 80%, #cead64 80%); }
.cursor { position: absolute; left: 150px; top: 267px; width: 9px; height: 13px; }
```
